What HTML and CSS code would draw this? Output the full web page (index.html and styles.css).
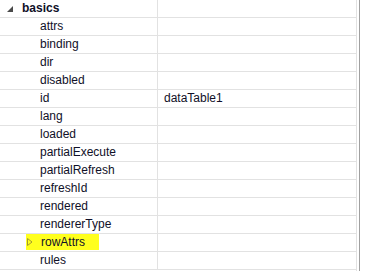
FILE: index.html
```html
<!DOCTYPE html>
<html>
<head>
  <title>Properties</title>
  <link rel="stylesheet" href="styles.css">
</head>
<body>
  <div class="sheet">
    <div class="grid">
      <div class="row">
        <div class="name group">
          <svg class="twisty" width="6" height="6" viewBox="0 0 6 6"><polygon points="6,0 6,6 0,6" fill="#4a4a4a"/></svg>
          basics
        </div>
        <div class="value"></div>
      </div>
      <div class="row"><div class="name">attrs</div><div class="value"></div></div>
      <div class="row"><div class="name">binding</div><div class="value"></div></div>
      <div class="row"><div class="name">dir</div><div class="value"></div></div>
      <div class="row"><div class="name">disabled</div><div class="value"></div></div>
      <div class="row"><div class="name">id</div><div class="value">dataTable1</div></div>
      <div class="row"><div class="name">lang</div><div class="value"></div></div>
      <div class="row"><div class="name">loaded</div><div class="value"></div></div>
      <div class="row"><div class="name">partialExecute</div><div class="value"></div></div>
      <div class="row"><div class="name">partialRefresh</div><div class="value"></div></div>
      <div class="row"><div class="name">refreshId</div><div class="value"></div></div>
      <div class="row"><div class="name">rendered</div><div class="value"></div></div>
      <div class="row"><div class="name">rendererType</div><div class="value"></div></div>
      <div class="row">
        <div class="name">
          <span class="mark">
            <svg class="closed" width="6" height="8" viewBox="0 0 6 8"><polygon points="0.5,0.5 5,4 0.5,7.5" fill="none" stroke="#a09a30"/></svg>
            rowAttrs
          </span>
        </div>
        <div class="value"></div>
      </div>
      <div class="row"><div class="name">rules</div><div class="value"></div></div>
    </div>
    <div class="edge"></div>
  </div>
</body>
</html>
```

FILE: styles.css
```css
html, body {
  margin: 0;
  background: #fff;
}

body {
  font-family: "Liberation Sans", Arial, sans-serif;
  font-size: 12px;
  color: #101028;
}

.sheet {
  display: flex;
  height: 271px;
  overflow: hidden;
}

.grid {
  width: 356px;
  border-right: 1px solid #e2e2e2;
}

.edge {
  width: 1px;
  margin-left: 2px;
  background: #a0a0a0;
}

.row {
  display: flex;
  height: 17px;
  line-height: 17px;
  border-bottom: 1px solid #e2e2e2;
}

.name {
  width: 158px;
  padding-left: 40px;
  box-sizing: border-box;
  border-right: 1px solid #e2e2e2;
  white-space: nowrap;
}

.value {
  flex: 1;
  padding-left: 6px;
}

.group {
  padding-left: 7px;
  font-weight: bold;
  display: flex;
  align-items: center;
  gap: 9px;
}

.mark {
  display: inline-flex;
  align-items: center;
  gap: 8px;
  margin-left: -14px;
  padding: 0 14px 0 1px;
  height: 16px;
  background: #ffff1e;
}
```
